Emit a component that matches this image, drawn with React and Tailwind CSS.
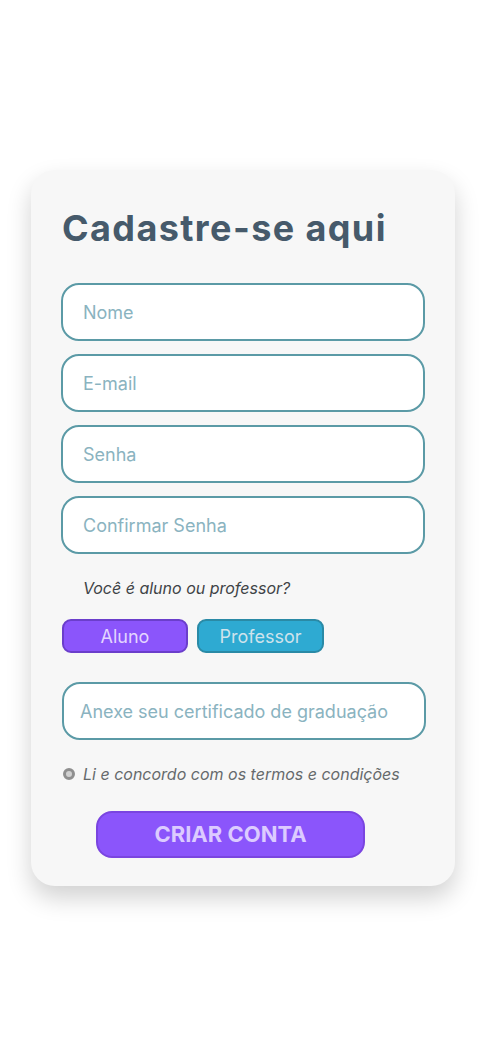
export default function App() {
  const font = { fontFamily: "Inter, 'Noto Sans', sans-serif" };
  const inputCls =
    "h-[58px] w-[364px] rounded-[18px] border-2 border-[#5b9aa6] bg-white pl-[20px] flex items-center text-[18px] text-[#8ab3c0]";
  return (
    <div className="min-h-[1055px] w-[487px] bg-white pt-[170px]" style={font}>
      <div className="ml-[31px] w-[424px] h-[716px] rounded-[24px] bg-[#f7f7f7] shadow-[0_12px_24px_rgba(0,0,0,0.18)] pl-[30px] pt-[36px]">
        <h1 className="text-[36px] font-bold leading-[44px] text-[#465a6b] pl-[1px] tracking-[1.4px]">
          Cadastre-se aqui
        </h1>
        <div className="mt-[33px] flex flex-col gap-[13px]">
          <div className={inputCls}>Nome</div>
          <div className={inputCls}>E-mail</div>
          <div className={inputCls}>Senha</div>
          <div className={inputCls}>Confirmar Senha</div>
        </div>
        <p className="mt-[22px] pl-[22px] text-[16px] italic text-[#3f4447] leading-[24px]">
          Você é aluno ou professor?
        </p>
        <div className="mt-[19px] flex gap-[9px] pl-[1px]">
          <div className="h-[34px] w-[126px] rounded-[9px] border-2 border-[#6b3ecb] bg-[#8b55fb] flex items-center justify-center text-[18px] text-[#e3d6ff]">
            Aluno
          </div>
          <div className="h-[34px] w-[127px] rounded-[9px] border-2 border-[#2a8aa6] bg-[#2eaad2] flex items-center justify-center text-[18px] text-[#cfe3ec]">
            Professor
          </div>
        </div>
        <div className="mt-[29px] ml-[1px] h-[58px] w-[364px] rounded-[18px] border-2 border-[#5b9aa6] bg-white pl-[16px] flex items-center text-[18px] text-[#8ab3c0]">
          Anexe seu certificado de graduação
        </div>
        <div className="mt-[24px] flex items-center gap-[8px] pl-[1px]">
          <span className="ml-[1px] h-[12px] w-[12px] rounded-full border-[3px] border-[#8f8f8f] bg-[#d0d0d0]"></span>
          <span className="text-[16px] italic text-[#666a6c] leading-[20px]">
            Li e concordo com os termos e condições
          </span>
        </div>
        <div className="mt-[27px] ml-[35px] h-[47px] w-[269px] rounded-[16px] border-2 border-[#7a45e0] bg-[#8b55fb] flex items-center justify-center text-[22px] font-bold text-[#dccbff]">
          CRIAR CONTA
        </div>
      </div>
    </div>
  );
}
